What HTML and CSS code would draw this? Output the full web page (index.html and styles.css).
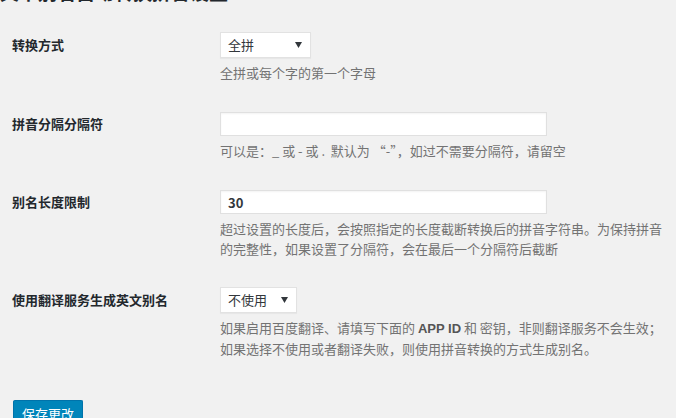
FILE: index.html
```html
<!DOCTYPE html>
<html lang="zh-CN">
<head>
<meta charset="utf-8">
<title>设置</title>
<link rel="stylesheet" href="styles.css">
</head>
<body>
<div class="wrap">
  <h2 class="page-title">文章别名自动转换拼音设置</h2>
  <form class="form">
    <div class="row row-1">
      <div class="label lh-sel">转换方式</div>
      <div class="field">
        <div class="select sel-1"><span>全拼</span><svg class="arrow" width="7" height="6" viewBox="0 0 7 6"><path d="M0 0H7L3.5 6Z" fill="#32373c"/></svg></div>
        <p class="desc">全拼或每个字的第一个字母</p>
      </div>
    </div>
    <div class="row row-2">
      <div class="label lh-inp">拼音分隔分隔符</div>
      <div class="field">
        <div class="input"></div>
        <p class="desc">可以是：_ 或 - 或 .&nbsp; 默认为 “-”，如过不需要分隔符，请留空</p>
      </div>
    </div>
    <div class="row row-3">
      <div class="label lh-inp">别名长度限制</div>
      <div class="field">
        <div class="input"><span class="val">30</span></div>
        <p class="desc">超过设置的长度后，会按照指定的长度截断转换后的拼音字符串。为保持拼音的完整性，如果设置了分隔符，会在最后一个分隔符后截断</p>
      </div>
    </div>
    <div class="row row-4">
      <div class="label lh-sel">使用翻译服务生成英文别名</div>
      <div class="field">
        <div class="select sel-4"><span>不使用</span><svg class="arrow" width="7" height="6" viewBox="0 0 7 6"><path d="M0 0H7L3.5 6Z" fill="#32373c"/></svg></div>
        <p class="desc">如果启用百度翻译、请填写下面的 <b>APP ID</b> 和 密钥，非则翻译服务不会生效；如果选择不使用或者翻译失败，则使用拼音转换的方式生成别名。</p>
      </div>
    </div>
    <div class="submit">
      <button type="button" class="button-primary">保存更改</button>
    </div>
  </form>
</div>
</body>
</html>
```
FILE: styles.css
```css
html, body {
  margin: 0;
  padding: 0;
  background: #f1f1f1;
}
body {
  font-family: "Noto Sans CJK SC", "Noto Sans", sans-serif;
  font-size: 13px;
  color: #23282d;
  width: 676px;
  height: 418px;
  overflow: hidden;
}
.wrap {
  padding-left: 12px;
  padding-top: 1px;
}
.page-title {
  margin: -19px 0 0 -12px;
  font-size: 19px;
  line-height: 20px;
  font-weight: 700;
  color: #23282d;
}
.form {
  display: flex;
  flex-direction: column;
}
.row {
  display: flex;
}
.row-1 { margin-top: 30px; }
.row-2 { margin-top: 29px; }
.row-3 { margin-top: 29px; }
.row-4 { margin-top: 28px; }
.label {
  width: 208px;
  flex: none;
  font-weight: 700;
  font-size: 13px;
}
.lh-sel { line-height: 26px; }
.lh-inp { line-height: 24px; }
.field {
  width: 450px;
}
.select {
  box-sizing: border-box;
  height: 26px;
  background: #fff;
  border: 1px solid #e2e2e2;
  display: flex;
  align-items: center;
  justify-content: space-between;
  padding: 0 6px 0 7px;
  box-shadow: 0 1px 1px rgba(0,0,0,0.04);
}
.select span {
  line-height: 24px;
  color: #32373c;
}
.sel-1 { width: 91px; }
.sel-4 { width: 77px; }
.arrow { margin-right: 2px; }
.input {
  box-sizing: border-box;
  width: 327px;
  height: 24px;
  background: #fff;
  border: 1px solid #e0e0e0;
  box-shadow: inset 0 1px 2px rgba(0,0,0,0.05);
  display: flex;
  align-items: center;
  padding: 0 7px;
}
.val {
  font-weight: 700;
  color: #32373c;
}
.desc {
  margin: 5px 0 0;
  color: #737373;
  line-height: 20px;
  font-size: 13px;
}
.desc b {
  color: #555;
  font-family: "Liberation Sans", "Noto Sans", sans-serif;
}
.submit {
  margin-top: 41px;
  padding-left: 1px;
}
.button-primary {
  font-family: "Noto Sans CJK SC", "Noto Sans", sans-serif;
  font-size: 13px;
  background: #0085ba;
  border: 1px solid #0073aa;
  border-bottom-color: #006799;
  color: #fff;
  height: 28px;
  padding: 0 8px;
  border-radius: 2px;
  line-height: 22px;
  box-shadow: 0 1px 0 #006799;
}
```
